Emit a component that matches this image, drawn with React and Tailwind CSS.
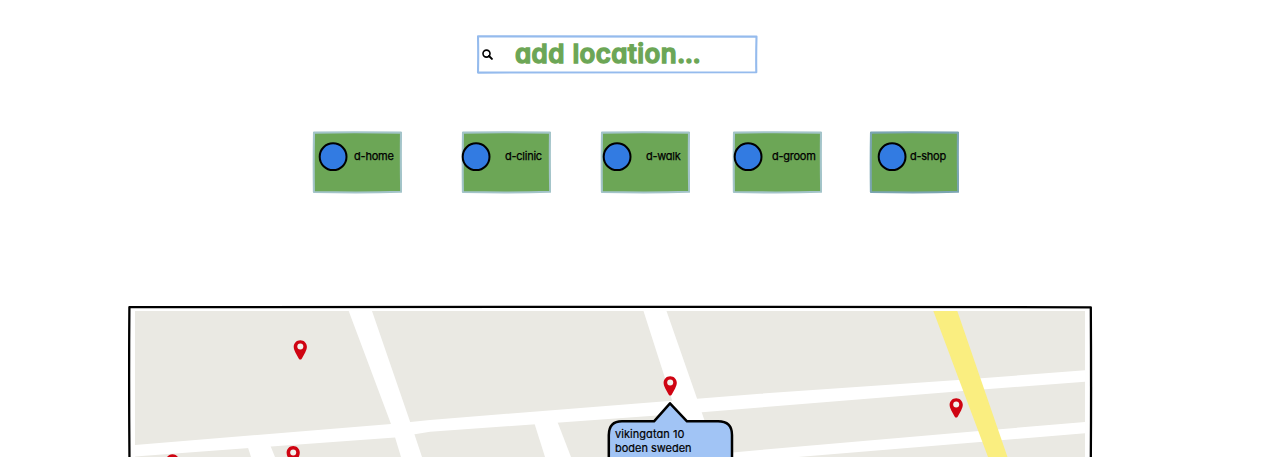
import React from "react";

const services = [
  { label: "d-home", box: "ml-[312px]", dot: "ml-[6px]", text: "ml-[6px]", track: "tracking-[-0.2px]", edge: "#a3c4c9" },
  { label: "d-clinic", box: "ml-[59px]", dot: "ml-0", text: "ml-[14px]", track: "tracking-[-0.25px]", edge: "#a3c4c9" },
  { label: "d-walk", box: "ml-[49px]", dot: "ml-[2px]", text: "ml-[14px]", track: "tracking-[-0.25px]", edge: "#a3c4c9" },
  { label: "d-groom", box: "ml-[42px]", dot: "ml-px", text: "ml-[9px]", track: "tracking-[-0.25px]", edge: "#a3c4c9" },
  { label: "d-shop", box: "ml-[47px]", dot: "ml-[8px]", text: "ml-[3px]", track: "tracking-[-0.25px]", edge: "#7ba5b2" },
];

function SketchBox({ edge }) {
  return (
    <svg className="absolute inset-0 h-full w-full" viewBox="0 0 90 63" aria-hidden="true">
      <path d="M2 1.6Q40 0.9 89 1.6Q88.6 30 89.2 60.8Q50 62 1.9 61Q1.5 30 2 1.6Z" fill="#6ca656" stroke={edge} strokeWidth="2.1" strokeLinejoin="round" />
    </svg>
  );
}

function ServiceCard({ label, box, dot, text, track, edge }) {
  return (
    <button className={`relative flex h-[63px] w-[90px] shrink-0 items-start pt-[11px] pl-[0.5px] ${box}`}>
      <SketchBox edge={edge} />
      <svg className={`relative size-[29px] shrink-0 overflow-visible ${dot}`} viewBox="0 0 29 29" aria-hidden="true">
        <circle cx="14.1" cy="14.7" r="13.4" fill="#327be2" stroke="#000" strokeWidth="2" />
      </svg>
      <span className={`relative mt-[7px] whitespace-nowrap pl-[0.5px] text-[11px] leading-[14px] text-black [-webkit-text-stroke:0.25px_#000] ${track} ${text}`}>{label}</span>
    </button>
  );
}

function Pin({ x, y }) {
  return (
    <g transform={`translate(${x} ${y})`}>
      <path d="M0-0.2C-3.8-0.2-6.6 2.7-6.6 6.4C-6.6 8.5-5.7 10.3-4.9 12L-1.6 18Q0 20.4 1.6 18L4.9 12C5.7 10.3 6.6 8.5 6.6 6.4C6.6 2.7 3.8-0.2 0-0.2Z" fill="#cf0412" />
      <circle cx="0" cy="6.2" r="3" fill="#f2f2ee" />
    </g>
  );
}

function StreetMap() {
  return (
    <svg className="block h-[152px] w-[965px]" viewBox="128 305 965 152" role="img" aria-label="Street map">
      <rect x="135" y="311" width="950" height="150" fill="#eae9e3" />
      <g fill="#fff">
        <path d="M135 445L391 424L430 420L672 400.7L760 393.7L958 380L1085 370.3V381.7L963 391L760 407.5L702 412.3L430 431.7L395 437.5L135 456.4Z" />
        <path d="M348.7 311H372L410 421.5L414 433L422 457H401L391 424Z" />
        <path d="M643.5 311H666.5L697 398.5L717 457H690L672 400Z" />
        <path d="M247.5 446H270.5L275 457H251Z" />
        <path d="M534 422H557.5L571 457H545Z" />
        <path d="M700 455.5L760 450L979 431L1085 422V433.3L980 442L798 457H700Z" />
      </g>
      <path d="M933.3 311H957.3L1007.5 457H988Z" fill="#faee80" />
      <path d="M129.5 460Q128.8 380 129.4 307.1Q500 306.6 760 306.8Q930 307.6 1090.8 307.3Q1091.3 390 1090.8 460" fill="none" stroke="#000" strokeWidth="2.3" strokeLinejoin="round" />
      <Pin x={300.3} y={340.4} />
      <Pin x={670.2} y={376.4} />
      <Pin x={956.2} y={398.4} />
      <Pin x={293.2} y={446.3} />
      <Pin x={172.5} y={454.4} />
      <path d="M608.8 461V435Q609 421.3 622 421.3H654L670 403.3L687 421.3H718Q732 421.3 732 435V461Z" fill="#a1c4f5" stroke="#000" strokeWidth="2.5" strokeLinejoin="round" />
    </svg>
  );
}

export default function App() {
  return (
    <main className="h-[457px] w-full overflow-hidden bg-white pt-[35px] font-['Inter',sans-serif] [font-feature-settings:'cv11'_1,'calt'_0]">
      <label className="relative ml-[476px] flex h-[39px] w-[282px] items-center">
        <svg className="absolute inset-0 h-full w-full" viewBox="0 0 282 39" aria-hidden="true">
          <path d="M2 1.4Q120 1 280.5 1.6Q280 20 280.3 37.3Q130 36.9 2 37.6Q2.4 18 2 1.4Z" fill="#fff" stroke="#95bbed" strokeWidth="2.1" strokeLinejoin="round" />
        </svg>
        <svg className="relative ml-[6px] size-[11px] shrink-0" viewBox="0 0 11 11" aria-hidden="true">
          <circle cx="4.5" cy="4.6" r="3.5" fill="none" stroke="#000" strokeWidth="1.6" />
          <path d="M7 7L9.9 9.9" stroke="#000" strokeWidth="2" strokeLinecap="round" />
        </svg>
        <span className="relative mb-[2px] ml-[22px] whitespace-nowrap text-[26px] leading-[34px] font-semibold tracking-[0.35px] text-[#6ca656] [-webkit-text-stroke:1.3px_#6ca656] [word-spacing:0.8px]">add location<span className="tracking-[-0.5px]">...</span></span>
      </label>
      <nav className="mt-[57px] flex">
        {services.map((s) => <ServiceCard key={s.label} {...s} />)}
      </nav>
      <section className="relative mt-[111px] ml-[128px] w-[965px]">
        <StreetMap />
        <p className="absolute top-[122px] left-[487px] text-[11px] leading-[14px] whitespace-nowrap text-black [-webkit-text-stroke:0.2px_#000]">
          <span className="block tracking-[0.05px]">vikingatan 10</span>
          <span className="block tracking-[-0.02px]">boden sweden</span>
        </p>
      </section>
    </main>
  );
}
